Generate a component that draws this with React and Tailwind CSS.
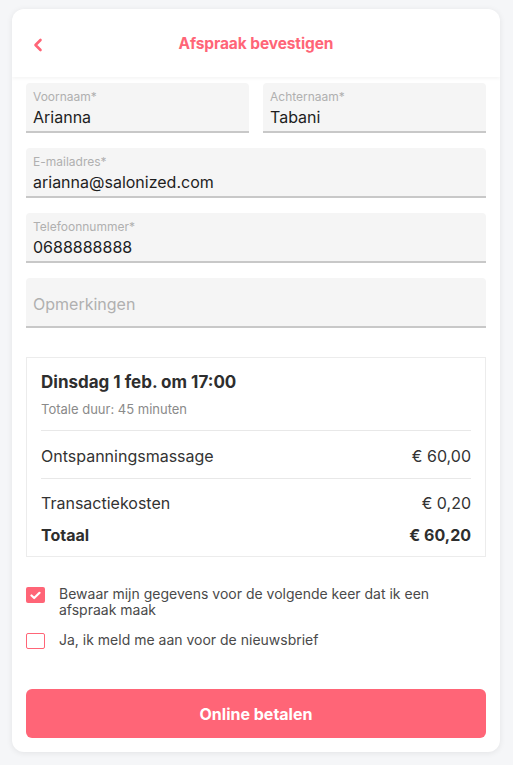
const font = { fontFamily: 'Inter, "Noto Sans", sans-serif' }

function Field({ label, value, className = '' }) {
  return (
    <div className={'h-[50px] bg-[#f5f5f5] rounded-t-[4px] border-b-2 border-[#c8c8c8] px-[7px] flex flex-col ' + className}>
      <span className="text-[12px] leading-[14px] text-[#b0b0b0] mt-[7px]">{label}</span>
      <span className="text-[16px] leading-[20px] text-[#1e1e1e] mt-[3px]">{value}</span>
    </div>
  )
}

function Check({ checked }) {
  return (
    <span
      className={
        'w-[19px] h-[16px] rounded-[2px] flex items-center justify-center flex-shrink-0 ' +
        (checked ? 'bg-[#ff6577]' : 'border border-[#ff6577] bg-white')
      }
    >
      {checked && (
        <svg width="11" height="9" viewBox="0 0 11 9" fill="none">
          <polyline points="1.5,4.5 4.2,7 9.5,1.8" stroke="white" strokeWidth="2.2" strokeLinecap="round" strokeLinejoin="round" />
        </svg>
      )}
    </span>
  )
}

export default function App() {
  return (
    <div className="min-h-[765px] bg-[#f5f6f8] pl-[12px] pr-[13px] pt-[9px] pb-[13px]" style={font}>
      <div className="bg-white rounded-[12px] shadow-[0_1px_6px_rgba(0,0,0,0.08)] h-[743px] flex flex-col overflow-hidden">
        {/* Header */}
        <div className="h-[68px] flex items-center relative shadow-[0_2px_3px_rgba(0,0,0,0.04)] flex-shrink-0">
          <svg className="absolute left-[21px] top-[29px]" width="10" height="14" viewBox="0 0 10 14" fill="none">
            <polyline points="7.5,2 2.5,7 7.5,12" stroke="#ff6577" strokeWidth="2.6" strokeLinecap="round" strokeLinejoin="round" />
          </svg>
          <h1 className="w-full text-center text-[15.5px] font-bold text-[#ff6577] tracking-[-0.1px] pt-[2px]">Afspraak bevestigen</h1>
        </div>

        <div className="px-[14px] pt-[6px] flex flex-col">
          {/* Form */}
          <div className="flex flex-col gap-[15px]">
            <div className="grid grid-cols-2 gap-[14px]">
              <Field label="Voornaam*" value="Arianna" />
              <Field label="Achternaam*" value="Tabani" />
            </div>
            <Field label="E-mailadres*" value="arianna@salonized.com" />
            <Field label="Telefoonnummer*" value="0688888888" />
            <div className="h-[50px] bg-[#f5f5f5] rounded-t-[4px] border-b-2 border-[#c8c8c8] px-[7px] pt-[4px] flex items-center">
              <span className="text-[16px] text-[#b0b0b0]">Opmerkingen</span>
            </div>
          </div>

          {/* Summary */}
          <div className="mt-[29px] border border-[#ececec] px-[14px] pt-[12px] pb-[9px]">
            <div className="text-[17px] leading-[24px] font-bold text-[#2e2e2e]">Dinsdag 1 feb. om 17:00</div>
            <div className="text-[13px] leading-[18px] text-[#8a8a8a] mt-[6px]">Totale duur: 45 minuten</div>
            <div className="border-t border-[#e8e8e8] mt-[12px] pt-[13px] pb-[10px] flex justify-between text-[16px] leading-[24px] text-[#333]">
              <span>Ontspanningsmassage</span>
              <span>€ 60,00</span>
            </div>
            <div className="border-t border-[#e8e8e8] pt-[12px] flex justify-between text-[16px] leading-[24px] text-[#333]">
              <span>Transactiekosten</span>
              <span>€ 0,20</span>
            </div>
            <div className="mt-[8px] flex justify-between text-[16px] leading-[24px] font-bold text-[#2e2e2e]">
              <span>Totaal</span>
              <span>€ 60,20</span>
            </div>
          </div>

          {/* Checkboxes */}
          <div className="mt-[29px] flex flex-col gap-[14px]">
            <label className="flex items-start gap-[14px]">
              <span className="mt-[1px]"><Check checked /></span>
              <span className="text-[14px] leading-[16px] text-[#4a4a4a]">Bewaar mijn gegevens voor de volgende keer dat ik een afspraak maak</span>
            </label>
            <label className="flex items-start gap-[14px]">
              <span className="mt-[1px]"><Check /></span>
              <span className="text-[14px] leading-[16px] text-[#4a4a4a]">Ja, ik meld me aan voor de nieuwsbrief</span>
            </label>
          </div>

          {/* Button */}
          <button className="mt-[40px] h-[49px] rounded-[6px] bg-[#ff6577] text-white text-[16px] font-bold">
            Online betalen
          </button>
        </div>
      </div>
    </div>
  )
}
